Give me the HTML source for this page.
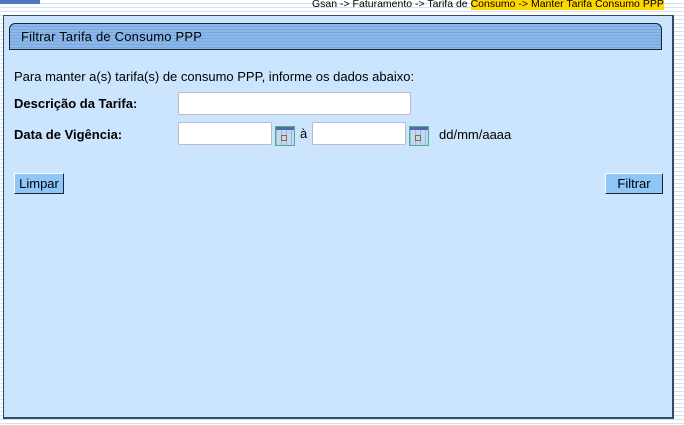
<!DOCTYPE html>
<html><head><meta charset="utf-8"><style>
body{margin:0;width:684px;height:425px;overflow:hidden;font-family:"Liberation Sans",sans-serif;
background:repeating-linear-gradient(#fff 0 3px,#cfe3f5 3px 4px);position:relative}
.top{position:absolute;left:0;top:0;width:40px;height:4px;background:#4a78b8}
.bc{position:absolute;left:312px;top:-2px;font-size:10.5px;color:#000;line-height:13px}
.bc span{background:#ffd700}
.panel{position:absolute;left:3px;top:15px;width:668px;height:401px;background:#cce5ff;border:1px solid #334a6a;border-bottom:2px solid #334a6a;border-right:2px solid #334a6a}
.hdr{position:absolute;left:5px;top:7px;width:651px;height:25px;border:1px solid #223;border-radius:6px 6px 0 0;
background:repeating-linear-gradient(#8ab8ea 0 2px,#7aa8de 2px 3px);}
.hdr div{position:absolute;left:11px;top:5px;font-size:13px;letter-spacing:0.2px;color:#000}
.t{position:absolute;font-size:13px;color:#000}
.b{font-weight:bold;font-size:13px}
.in{position:absolute;background:#fff;border:1px solid #bbc;border-radius:2px;height:21px}
.cal{position:absolute;width:20px;height:20px;background:linear-gradient(#5566aa 0 3px,transparent 3px),repeating-linear-gradient(90deg,#9bd 0 1px,#bde 1px 5px);border:1px solid #5a8;box-sizing:border-box}
.cal:after{content:"";position:absolute;left:5px;top:8px;width:4px;height:4px;border:1px solid #a55}
.btn{position:absolute;height:19px;background:#8fc6f8;border:1px solid #fff;border-right-color:#223;border-bottom-color:#223;font-size:13px;line-height:19px;text-align:center}
</style></head><body>
<div class="top"></div>
<div class="bc">Gsan -&gt; Faturamento -&gt; Tarifa de <span>Consumo -&gt; Manter Tarifa Consumo PPP</span></div>
<div class="panel">
<div class="hdr"><div>Filtrar Tarifa de Consumo PPP</div></div>
<div class="t" style="left:10px;top:53px">Para manter a(s) tarifa(s) de consumo PPP, informe os dados abaixo:</div>
<div class="t b" style="left:10px;top:80px">Descrição da Tarifa:</div>
<div class="in" style="left:174px;top:76px;width:231px"></div>
<div class="t b" style="left:10px;top:111px">Data de Vigência:</div>
<div class="in" style="left:174px;top:106px;width:92px"></div>
<div class="cal" style="left:271px;top:110px"></div>
<div class="t" style="left:296px;top:110px">à</div>
<div class="in" style="left:308px;top:106px;width:92px"></div>
<div class="cal" style="left:405px;top:110px"></div>
<div class="t" style="left:435px;top:111px">dd/mm/aaaa</div>
<div class="btn" style="left:10px;top:157px;width:48px">Limpar</div>
<div class="btn" style="left:601px;top:157px;width:56px">Filtrar</div>
</div>
</body></html>
